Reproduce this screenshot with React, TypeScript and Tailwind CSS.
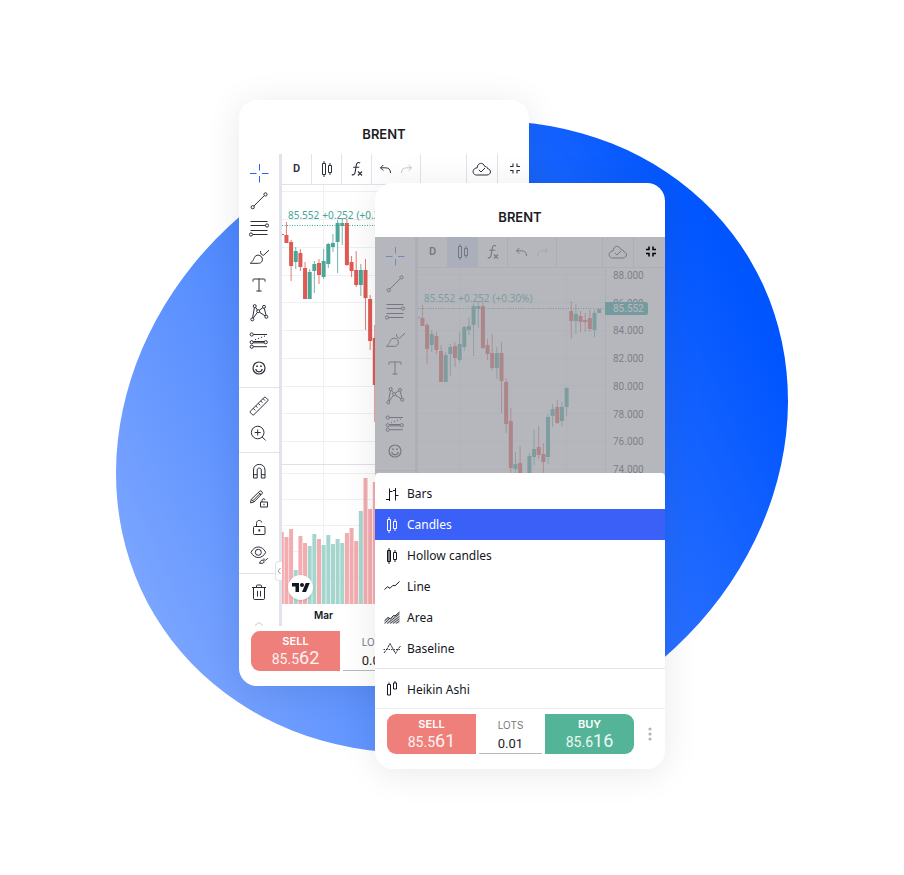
import React from "react";
import { Type } from "lucide-react";

type IconProps = { children: React.ReactNode; className?: string; width?: number };

function Icon({ children, className = "", width = 1 }: IconProps) {
  return (
    <svg
      viewBox="0 0 20 20"
      className={`size-5 shrink-0 ${className}`}
      fill="none"
      stroke="currentColor"
      strokeWidth={width}
      aria-hidden="true"
    >
      {children}
    </svg>
  );
}

/* ---------- drawing tools ---------- */

const CrosshairIcon = () => (
  <Icon className="text-[#2962ff]">
    <path d="M10.5 1v6.5M10.5 13v6.5M1 10.5h6.5M13 10.5h6.5" />
  </Icon>
);
const TrendIcon = () => (
  <Icon>
    <circle cx="3.7" cy="16.2" r="1.6" />
    <circle cx="16.5" cy="3.4" r="1.6" />
    <path d="M4.9 15 15.3 4.6" />
  </Icon>
);
const FibIcon = () => (
  <Icon>
    <path d="M1.5 2.5h17M1.5 6.5h14.8M1.5 11.5h17M3.8 15.500h14.7" />
    <circle cx="18" cy="6.500" r="1.6" />
    <circle cx="2" cy="15.500" r="1.6" />
  </Icon>
);
const BrushIcon = () => (
  <Icon>
    <path d="M1.3 16.3h8.2c3.4 0 5-3.600 3.100-6.300C10.800 7.400 7 7.600 5.600 10.200c-.9 1.700-.8 3-4.300 6.100Z" />
    <path d="M11.600 4c-.4 2.300.8 4.200 3 4.200L20 3.200" />
  </Icon>
);
const PatternIcon = () => (
  <Icon>
    <path d="M5.400 4.500 3.600 14.900M6.600 4.300 8.200 6.900M10.200 7.300 13.900 4.700M15.300 5.400 17 12.200M8.300 9.500 4.200 15.200M10.400 9.100 16.200 12.900" />
    <circle cx="5.7" cy="3.100" r="1.5" />
    <circle cx="15" cy="3.800" r="1.5" />
    <circle cx="9.200" cy="8.200" r="1.500" />
    <circle cx="3.300" cy="16.400" r="1.500" />
    <circle cx="17.300" cy="13.800" r="1.500" />
  </Icon>
);
const ForecastIcon = () => (
  <Icon>
    <path d="M4.300 3.500H18M4.300 10.500h10.900M4.300 11.800h10.900M4.300 15.700H18" />
    <path d="M6 8.800 16 5" strokeDasharray="1.200 2" />
    <circle cx="2.700" cy="3.500" r="1.600" />
    <circle cx="2.700" cy="11.200" r="1.600" />
    <circle cx="16.700" cy="11.200" r="1.600" />
    <circle cx="2.700" cy="15.700" r="1.600" />
  </Icon>
);
const SmileIcon = () => (
  <Icon width={1.2}>
    <circle cx="10" cy="9" r="6" />
    <path d="M6.800 10c.5 3.700 5.900 3.700 6.400 0" />
    <path d="M7.200 7.300h1.600M11.200 7.300h1.600" strokeWidth="1.600" />
  </Icon>
);
const RulerIcon = () => (
  <Icon>
    <path d="m1.400 15.200 13.800-13.800q.8-.7 1.500 0l2 2q.7.8 0 1.500L4.900 18.700q-.8.7-1.500 0l-2-2q-.7-.8 0-1.500Z" />
    <path d="m4.200 12.400 2 2M6.700 9.900l1.700 1.700M9.200 7.400l2 2M11.700 4.900l1.700 1.700M14 2.600l2 2" />
  </Icon>
);
const ZoomIcon = () => (
  <Icon>
    <circle cx="8.700" cy="8.500" r="6.300" />
    <path d="M8.700 5.500v6M5.700 8.500h6M13.200 13l3.500 3.500" />
  </Icon>
);
const MagnetIcon = () => (
  <Icon>
    <path d="M4.500 17V9c0-7.500 11.500-7.500 11.500 0v8h-3.700V9c0-2.600-4.100-2.600-4.100 0v8ZM4.500 13.700h3.700M12.300 13.700H16" />
  </Icon>
);
const PencilLockIcon = () => (
  <Icon>
    <path d="m1.500 13.800.8-3.500 8.400-8.100q1.200-.7 2.200.4.900 1 .1 2.100L4.900 13ZM2.500 10.300l2.500 2.600M4.100 11.500l7.300-7.300M9.500 3.500l2.400 2.400" />
    <path d="M11.500 13h7v5h-7ZM13 13v-1.500c0-2.200 3-2.200 3-.5M15 14.800v1.500" />
  </Icon>
);
const LockIcon = () => (
  <Icon>
    <rect x="4.500" y="9.500" width="11.500" height="8" rx="1" />
    <path d="M7.500 9.500V6.300c0-3.700 5-3.700 5.200-.8" />
    <path d="M10.300 12.300v2.300" strokeWidth="1.800" />
  </Icon>
);
const EyeIcon = () => (
  <Icon>
    <path d="M2 7.300C5.500.2 13.200.2 16.700 7.300 13.200 14.300 5.500 14.300 2 7.300Z" />
    <circle cx="9.300" cy="7.300" r="3" />
    <path d="M10.500 18.300h2.800c1.800 0 2.200-2 1-2.900-1.700-1-2.800.4-3.800 2.900ZM14.800 13.500c0 1.400.8 2 1.700 1.800l2.300-2" />
  </Icon>
);
const TrashIcon = () => (
  <Icon>
    <path d="M3 5.500h14M7.500 5.500V4q0-1 1-1h3q1 0 1 1v1.500M4.500 5.500v10.800q0 1.200 1.200 1.200h8.600q1.200 0 1.200-1.200V5.500M8.500 8.800v5.700M11.500 8.800v5.700" />
  </Icon>
);

const toolGroups: { label: string; icon: React.ReactNode }[][] = [
  [
    { label: "Cross", icon: <CrosshairIcon /> },
    { label: "Trend line", icon: <TrendIcon /> },
    { label: "Fib retracement", icon: <FibIcon /> },
    { label: "Brush", icon: <BrushIcon /> },
    { label: "Text", icon: <Type size={18} strokeWidth={1.3} /> },
    { label: "Patterns", icon: <PatternIcon /> },
    { label: "Forecast", icon: <ForecastIcon /> },
    { label: "Emoji", icon: <SmileIcon /> },
  ],
  [
    { label: "Measure", icon: <RulerIcon /> },
    { label: "Zoom in", icon: <ZoomIcon /> },
  ],
  [
    { label: "Magnet", icon: <MagnetIcon /> },
    { label: "Stay in drawing mode", icon: <PencilLockIcon /> },
    { label: "Lock drawings", icon: <LockIcon /> },
    { label: "Hide drawings", icon: <EyeIcon /> },
  ],
  [{ label: "Remove", icon: <TrashIcon /> }],
];

function ToolRail() {
  return (
    <div className="flex w-10 shrink-0 flex-col pt-[5px]">
      {toolGroups.map((group, g) => (
        <div key={g} className="flex flex-col">
          {g > 0 && <div className="my-1 h-px bg-[#e0e3eb]" />}
          {group.map((tool) => (
            <button key={tool.label} aria-label={tool.label} className="flex h-7 items-center justify-center">
              {tool.icon}
            </button>
          ))}
        </div>
      ))}
      <svg viewBox="0 0 10 5" className="mx-auto mt-auto h-[5px] w-[10px]" fill="none" stroke="#c9cbd2" aria-hidden="true">
        <path d="M1 4.500 5 1.500l4 3" />
      </svg>
    </div>
  );
}

/* ---------- chart ---------- */

type Candle = [up: 0 | 1, open: number, close: number, high: number, low: number];

const candles: Candle[] = [
  [0, 50, 51, 50, 51],
  [0, 51, 59, 38, 59],
  [0, 58, 82, 56, 97],
  [1, 67, 78, 63, 85],
  [0, 69, 83, 65, 87],
  [0, 84, 115, 78, 115],
  [1, 88, 115, 85, 115],
  [1, 80, 87, 77, 109],
  [0, 79, 91, 75, 100],
  [1, 77, 93, 65, 95],
  [1, 60, 80, 59, 84],
  [1, 59, 63, 50, 68],
  [1, 39, 58, 36, 89],
  [1, 39, 42, 34, 61],
  [0, 39, 81, 35, 82],
  [0, 78, 87, 72, 93],
  [0, 86, 101, 67, 103],
  [1, 86, 101, 80, 112],
  [0, 86, 114, 75, 146],
  [0, 115, 157, 111, 166],
  [0, 154, 201, 141, 238],
  [1, 197, 202, 185, 220],
  [0, 196, 216, 179, 230],
  [0, 214, 226, 210, 232],
  [1, 189, 215, 186, 220],
  [1, 182, 190, 163, 198],
  [0, 180, 188, 159, 192],
  [0, 187, 195, 176, 211],
  [1, 150, 190, 147, 197],
  [1, 142, 149, 137, 160],
  [0, 140, 156, 133, 157],
  [1, 140, 154, 135, 159],
  [1, 121, 140, 120, 149],
  [0, 44, 54, 34, 72],
  [1, 47, 54, 37, 67],
  [0, 49, 55, 44, 65],
  [0, 53, 55, 46, 65],
  [0, 51, 62, 43, 65],
  [1, 46, 63, 43, 70],
  [1, 42, 46, 42, 46],
];

const volumes = [
  72, 67, 75, 34, 68, 61, 58, 70, 65, 59, 69, 60, 65, 61, 71, 76, 63, 93, 126, 95, 122, 60, 80, 75, 64, 58, 66, 62, 70,
  61, 57, 63, 68, 64, 60, 58, 66, 61, 59, 40,
];

const priceLines = [8, 36, 64, 92, 119, 147, 175, 203, 230, 258];
const volumeLines = [290, 316, 342, 368, 394];
const STEP = 4.65;

function Candlesticks() {
  return (
    <svg viewBox="0 1 187 419" className="block h-[419px] w-[187px] shrink-0" aria-label="BRENT daily candles">
      <g stroke="#eef0f2">
        {[...priceLines, ...volumeLines].map((y) => (
          <path key={y} d={`M0 ${y - 0.5}H187`} />
        ))}
        <path d="M41.500 0V420M148.500 0V420" />
      </g>
      <path d="M0 280.500H187" stroke="#dfe1e6" />
      {volumes.map((v, i) => (
        <rect
          key={i}
          x={i * STEP - 2.2}
          y={420 - v}
          width="4"
          height={v}
          fill={candles[i][0] ? "#a5d6cd" : "#f3acb0"}
        />
      ))}
      <path d="M0 41.500H187" stroke="#42a597" strokeDasharray="1 1.500" />
      {candles.map(([up, top, bottom, high, low], i) => (
        <g key={i} fill={up ? "#4ba698" : "#df5a53"}>
          <rect x={i * STEP - 0.7} y={high} width="1" height={low - high} opacity="0.8" />
          <rect x={i * STEP - 2.2} y={top} width="4" height={bottom - top} />
        </g>
      ))}
    </svg>
  );
}

const prices = ["88.000", "86.000", "84.000", "82.000", "80.000", "78.000", "76.000", "74.000"];

function PriceScale() {
  return (
    <div className="relative flex-1 border-l border-[#e0e3eb] pt-px font-[Roboto,sans-serif] text-[10px] leading-[14px] text-[#40434e]">
      <div className="flex h-[208px] flex-col justify-between pl-[7px]">
        {prices.map((p) => (
          <span key={p}>{p}</span>
        ))}
      </div>
      <span className="absolute top-[34px] -left-px h-[13px] w-[43px] rounded-r-xs bg-[#26a69a] pl-2 leading-[13px] text-white">
        85.552
      </span>
    </div>
  );
}

function Chart() {
  return (
    <div className="relative flex flex-1 flex-col">
      <div className="flex">
        <Candlesticks />
        <PriceScale />
      </div>
      <div className="absolute top-[22px] left-[6px] flex gap-[3px] font-['Noto_Sans',sans-serif] text-[10px] leading-4 text-[#42a597]">
        <span>85.552</span>
        <span>+0.252</span>
        <span>(+0.30%)</span>
      </div>
      <div className="absolute top-[390px] left-[6px] flex size-[25px] items-center justify-center rounded-full bg-white shadow-sm">
        <svg viewBox="0 0 36 28" className="h-[14px] w-[18px]" fill="#131722" aria-label="TradingView">
          <path d="M14 22H7V11H0V4h14v18ZM28 22h-8l7.500-18h8L28 22Z" />
          <circle cx="20" cy="8" r="4" />
        </svg>
      </div>
      <div className="flex-1 pl-8 font-[Inter,sans-serif] text-[10px] leading-[23px] font-semibold text-[#131722]">Mar</div>
    </div>
  );
}

/* ---------- top bar ---------- */

function CandlesGlyph({ solid = false }: { solid?: boolean }) {
  return (
    <Icon>
      <path d="M7 2v2.500M7 15.500V18M13 4v2.500M13 13.500V16" />
      <path d="M5.500 4.500h3v11h-3Z" fill={solid ? "currentColor" : "none"} fillOpacity="0.55" />
      <path d="M11.500 6.500h3v7h-3Z" />
    </Icon>
  );
}

function TopBar({ active }: { active: boolean }) {
  return (
    <div className="flex h-[31px] shrink-0 border-b border-[#e0e3eb] *:flex *:items-center *:justify-center">
      <button className="w-[30px] border-r border-[#e0e3eb] font-[Roboto,sans-serif] text-[11px] font-semibold">D</button>
      <button
        aria-label="Chart type"
        className={`w-[30px] border-r border-[#e0e3eb] ${active ? "bg-[#dce4fc]" : ""}`}
      >
        <CandlesGlyph />
      </button>
      <button aria-label="Indicators" className="w-[30px] border-r border-[#e0e3eb]">
        <Icon width={1.100}>
          <path d="M4.800 15.500c2 1.200 3-.4 3.400-2.700l1-6.300c.4-2.600 2-3.700 4-2.500M6.200 8.300h6" />
          <path d="m11 12.500 4 4M15 12.500l-4 4" />
        </Icon>
      </button>
      <div className="w-[49px] border-r border-[#e0e3eb]">
        <button aria-label="Undo">
          <Icon>
            <path d="M7.300 6 4.500 8.800l2.800 2.800M4.700 8.800h4.800c3.500 0 5 2 5 5.200" />
          </Icon>
        </button>
        <button aria-label="Redo" className="text-[#c5c7cd]">
          <Icon>
            <path d="M12.700 6 15.500 8.800l-2.800 2.800M15.300 8.800h-4.800c-3.500 0-5 2-5 5.200" />
          </Icon>
        </button>
      </div>
      <div className="flex-1 border-r border-[#e0e3eb]" />
      <button aria-label="Save" className="w-[31px] border-r border-[#e0e3eb]">
        <Icon>
          <path d="M4.500 16h10.500c4.300-.2 4.700-5.600.6-6.300-.2-1.600-1.500-2.300-2.700-2C11 2.500 5.300 3.700 5.200 8.800 0 9.200-.3 15.800 4.500 16Z" />
          <path d="m6.800 10.800 2.200 2.200 4-4" />
        </Icon>
      </button>
      <button aria-label="Exit full screen" className={`w-[31px] ${active ? "relative z-10 text-black" : ""}`}>
        <Icon width={active ? 1.500 : 1.100}>
          <path d="M6 7.500h3v-3M13 4.500v3h3M6 11.500h3v3M13 14.500v-3h3" />
        </Icon>
      </button>
    </div>
  );
}

/* ---------- chart type menu ---------- */

const chartTypes: { label: string; icon: React.ReactNode; selected?: boolean; divided?: boolean }[] = [
  {
    label: "Bars",
    icon: (
      <Icon>
        <path d="M7.500 4.500V17M4 15.500h3.500M7.500 7.500h3M13.500 4v12.500M11 6.500h2.500M13.500 11.500h3" />
      </Icon>
    ),
  },
  { label: "Candles", icon: <CandlesGlyph />, selected: true },
  { label: "Hollow candles", icon: <CandlesGlyph solid /> },
  {
    label: "Line",
    icon: (
      <Icon>
        <path d="M2.500 12.500 5.500 9.800l2.500 1.500 3-3 2 .5 4.500-4.300" />
      </Icon>
    ),
  },
  {
    label: "Area",
    icon: (
      <Icon>
        <path d="M2.500 13 6 9.500 8.500 11l3-3.500 1.500.5 4.500-4V15.500h-15Z" fill="currentColor" fillOpacity="0.2" stroke="none" />
        <path d="M2.500 12.800 6 9.500 8.500 11l3-3.500 1.500.5 4.500-4" />
        <path
          d="M2.500 15.500 7 11M5 15.500l12.500-9.500M8 15.500l9.500-7M11 15.500l6.500-4.800M14 15.500l3.500-2.500"
          strokeWidth="0.700"
        />
      </Icon>
    ),
  },
  {
    label: "Baseline",
    icon: (
      <Icon>
        <path d="M1.500 10.500h17" strokeDasharray="1.500 1" strokeWidth="0.800" />
        <path d="M2 14 5 10 8 4.500l3 5.500 2.500 4.500L16 10l2.500-3" strokeWidth="0.900" strokeDasharray="3 0.600" />
      </Icon>
    ),
  },
  {
    label: "Heikin Ashi",
    divided: true,
    icon: (
      <Icon>
        <path d="M7 2.500v2M13 1v2M5.500 4.500h3v10.500h-3ZM11.500 3h3v6h-3Z" />
      </Icon>
    ),
  },
];

function ChartTypeMenu() {
  return (
    <ul className="absolute inset-x-0 bottom-0 h-[236px] rounded-t-sm border-b border-[#eceef1] bg-white pt-[5px]">
      {chartTypes.map((t) => (
        <li key={t.label} className={t.divided ? "mt-1 border-t border-[#e0e3eb] pt-[5px]" : ""}>
          <button
            className={`flex h-[31px] w-full items-center gap-[5px] pl-[7px] font-['Noto_Sans',sans-serif] text-[12px] ${
              t.selected ? "bg-[#3a60f8] text-white" : "text-[#131722]"
            }`}
          >
            {t.icon}
            {t.label}
          </button>
        </li>
      ))}
    </ul>
  );
}

/* ---------- order bar ---------- */

function PriceButton({ side, base, pips, className }: { side: string; base: string; pips: string; className: string }) {
  return (
    <button className={`flex h-10 w-[89px] flex-col items-center text-white ${className}`}>
      <span className="h-[18px] text-[11px] leading-5 font-semibold">{side}</span>
      <span className="font-[Roboto,sans-serif] text-[14px] leading-[18px] text-white/90">
        {base}
        <span className="text-[18px]">{pips}</span>
      </span>
    </button>
  );
}

function OrderBar({ id, sellPips }: { id: string; sellPips: string }) {
  return (
    <div className="flex h-[60px] gap-[3px] pt-[5px] pl-3">
      <PriceButton side="SELL" base="85.5" pips={sellPips} className="rounded-l-[9px] bg-[#ee7f7b]" />
      <div className="flex h-10 w-[63px] flex-col items-center border-b border-[#b9b9bd]">
        <label htmlFor={id} className="h-[19px] text-[10px] leading-[22px] text-[#77777b]">
          LOTS
        </label>
        <input
          id={id}
          defaultValue="0.01"
          inputMode="decimal"
          className="h-5 w-full bg-transparent text-center font-[Roboto,sans-serif] text-[13px] text-[#1d1d1f] outline-none"
        />
      </div>
      <PriceButton side="BUY" base="85.6" pips="16" className="rounded-r-[9px] bg-[#53b497]" />
      <button aria-label="More" className="flex h-10 flex-1 items-center justify-center pr-[3px]">
        <svg viewBox="0 0 4 14" className="h-[14px] w-1" fill="#b4b4b8" aria-hidden="true">
          <circle cx="2" cy="2" r="1.600" />
          <circle cx="2" cy="7" r="1.600" />
          <circle cx="2" cy="12" r="1.600" />
        </svg>
      </button>
    </div>
  );
}

/* ---------- phone card ---------- */

function PhoneCard({ id, sellPips, menu = false, className }: { id: string; sellPips: string; menu?: boolean; className: string }) {
  return (
    <section
      className={`isolate col-start-1 row-start-1 w-[290px] overflow-hidden rounded-[18px] bg-white shadow-[0_4px_36px_rgba(0,0,0,0.09)] ${className}`}
    >
      <h2 className="h-[54px] pt-6 text-center text-[13px] leading-5 font-semibold text-[#1d1d1f]">BRENT</h2>
      <div className="relative flex h-[472px] text-[#2a2e39]">
        <ToolRail />
        <div className="relative w-[3px] shrink-0 bg-[#e0e3eb]">
          <button
            aria-label="Hide toolbar"
            className="absolute right-0 bottom-[45px] flex h-5 w-[7px] items-center justify-center rounded-l-sm border border-r-0 border-[#e0e3eb] bg-white"
          >
            <svg viewBox="0 0 4 8" className="h-2 w-1" fill="none" stroke="#9598a1" aria-hidden="true">
              <path d="M3.500 1 1 4l2.500 3" />
            </svg>
          </button>
        </div>
        <div className="flex min-w-0 flex-1 flex-col">
          <TopBar active={menu} />
          <Chart />
        </div>
        {menu && (
          <>
            <div className="absolute inset-0 bg-[#9598a1]/70" />
            <ChartTypeMenu />
          </>
        )}
      </div>
      <OrderBar id={id} sellPips={sellPips} />
    </section>
  );
}

export default function App() {
  return (
    <main className="relative isolate flex min-h-screen justify-center overflow-hidden bg-white pt-[100px] font-[Inter,sans-serif]">
      <svg
        viewBox="0 0 904 875"
        className="absolute top-0 left-1/2 -z-10 h-[875px] w-[904px] -translate-x-1/2"
        aria-hidden="true"
      >
        <defs>
          <linearGradient id="halo" gradientUnits="userSpaceOnUse" x1="89" y1="615" x2="782" y2="276">
            <stop offset="0" stopColor="#84abff" />
            <stop offset="0.950" stopColor="#0055ff" />
          </linearGradient>
          <clipPath id="halo-shape">
            <ellipse cx="452" cy="437" rx="346.700" ry="304.400" transform="rotate(-31 452 437)" />
          </clipPath>
        </defs>
        <rect width="904" height="875" fill="url(#halo)" clipPath="url(#halo-shape)" />
      </svg>
      <div className="grid h-fit w-[426px]">
        <PhoneCard id="lots-back" sellPips="62" className="mb-[83px]" />
        <PhoneCard id="lots-front" sellPips="61" menu className="mt-[83px] ml-[136px]" />
      </div>
    </main>
  );
}
